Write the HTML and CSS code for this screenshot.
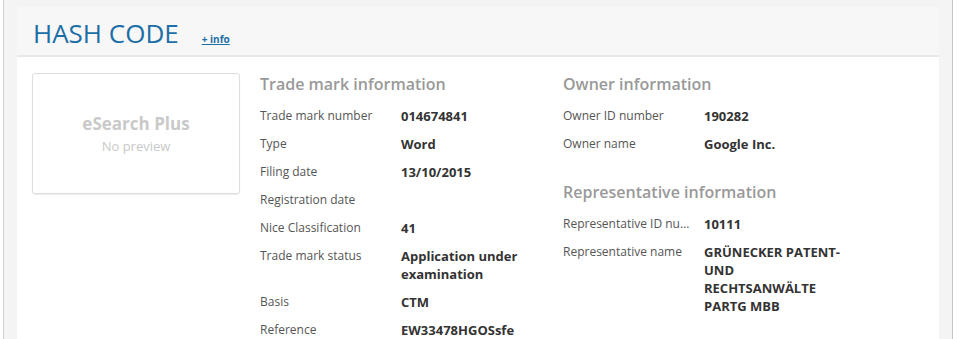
FILE: index.html
```html
<!DOCTYPE html>
<html lang="en">
<head>
  <meta charset="UTF-8">
  <meta name="viewport" content="width=device-width, initial-scale=1.0">
  <title>HASH CODE - eSearch Plus</title>
  <link rel="stylesheet" href="styles.css">
</head>
<body>

<div class="frame">
  <div class="panel">
    <!-- Title bar -->
    <div class="panel-header">
      <h1 class="title">HASH CODE</h1>
      <a class="more-info" href="#">+ info</a>
    </div>

    <div class="panel-body">
      <!-- Image preview -->
      <div class="preview">
        <div class="preview-brand">eSearch Plus</div>
        <div class="preview-note">No preview</div>
      </div>

      <!-- Trade mark column -->
      <div class="column">
        <h2 class="section-title">Trade mark information</h2>
        <div class="row"><div class="label">Trade mark number</div><div class="value">014674841</div></div>
        <div class="row"><div class="label">Type</div><div class="value">Word</div></div>
        <div class="row"><div class="label">Filing date</div><div class="value">13/10/2015</div></div>
        <div class="row"><div class="label">Registration date</div><div class="value"></div></div>
        <div class="row"><div class="label">Nice Classification</div><div class="value">41</div></div>
        <div class="row"><div class="label">Trade mark status</div><div class="value">Application under examination</div></div>
        <div class="row"><div class="label">Basis</div><div class="value">CTM</div></div>
        <div class="row"><div class="label">Reference</div><div class="value">EW33478HGOSsfe</div></div>
      </div>

      <!-- Owner / representative column -->
      <div class="column">
        <div class="section">
          <h2 class="section-title">Owner information</h2>
          <div class="row"><div class="label">Owner ID number</div><div class="value">190282</div></div>
          <div class="row"><div class="label">Owner name</div><div class="value">Google Inc.</div></div>
        </div>
        <div class="section">
          <h2 class="section-title">Representative information</h2>
          <div class="row"><div class="label">Representative ID number</div><div class="value">10111</div></div>
          <div class="row"><div class="label">Representative name</div><div class="value">GRÜNECKER PATENT- UND RECHTSANWÄLTE PARTG MBB</div></div>
        </div>
      </div>
    </div>
  </div>
</div>

</body>
</html>
```

FILE: styles.css
```css
/* Basic reset */
* {
  margin: 0;
  padding: 0;
  box-sizing: border-box;
}

body {
  font-family: "Open Sans", "Liberation Sans", sans-serif;
  background-color: #fff;
  color: #555;
}

/* Outer scroll frame */
.frame {
  margin-left: 3px;
  width: 950px;
  min-height: 100vh;
  background-color: #f4f4f4;
  border-left: 1px solid #cfcfcf;
  border-right: 1px solid #c4c4c4;
  padding: 7px 13px 0 13px;
}

.panel {
  background-color: #fff;
  border-radius: 3px 3px 0 0;
  min-height: 400px;
}

/* Header */
.panel-header {
  display: flex;
  align-items: baseline;
  height: 50px;
  padding: 9px 16px 0 16px;
  background-color: #f7f7f7;
  border-bottom: 2px solid #e8e8e8;
  border-radius: 3px 3px 0 0;
}

.title {
  font-size: 26px;
  font-weight: 400;
  line-height: 34px;
  color: #1c6ea6;
}

.more-info {
  margin-left: 23px;
  font-size: 10px;
  font-weight: 700;
  color: #1c6ea6;
}

/* Body */
.panel-body {
  display: flex;
  align-items: flex-start;
  padding: 16px 15px;
}

.preview {
  width: 208px;
  height: 121px;
  flex-shrink: 0;
  margin-right: 20px;
  border: 1px solid #dedede;
  border-radius: 3px;
  box-shadow: 0 1px 1px rgba(0, 0, 0, 0.08);
  display: flex;
  flex-direction: column;
  align-items: center;
  justify-content: center;
  padding-top: 2px;
  color: #c9c9c9;
}

.preview-brand {
  font-size: 17px;
  font-weight: 700;
  line-height: 22px;
}

.preview-note {
  font-size: 13px;
  line-height: 22px;
}

.column {
  width: 303px;
  margin-top: -1px;
}

.section + .section {
  margin-top: 27px;
}

.section-title {
  font-size: 16px;
  font-weight: 600;
  line-height: 24px;
  color: #999;
  margin-bottom: 11px;
}

.row {
  display: flex;
  font-size: 12px;
  line-height: 18px;
  margin-bottom: 10px;
}

.label {
  width: 141px;
  flex-shrink: 0;
  padding-right: 6px;
  white-space: nowrap;
  overflow: hidden;
  text-overflow: ellipsis;
  color: #555;
}

.value {
  width: 145px;
  font-size: 13px;
  font-weight: 700;
  color: #333;
}
```
